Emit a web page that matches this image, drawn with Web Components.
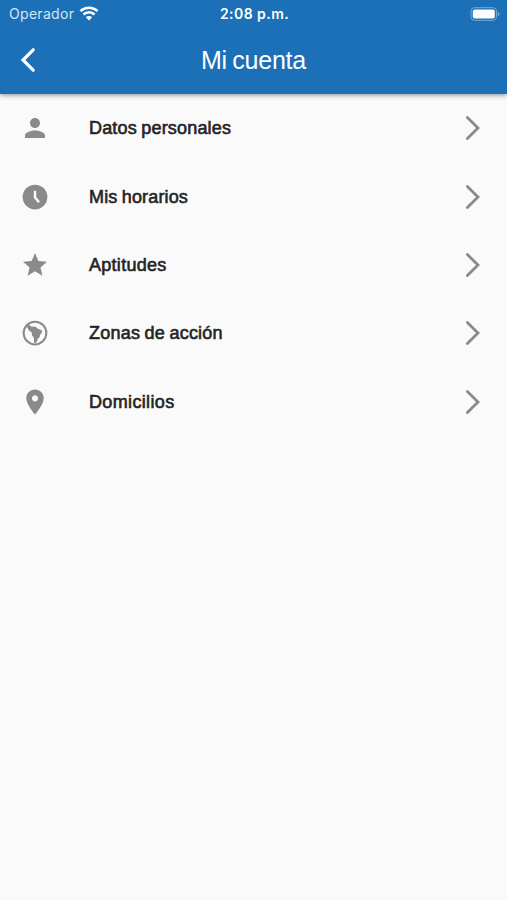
<!DOCTYPE html>
<html lang="es">
<head>
    <meta charset="UTF-8">
    <meta name="viewport" content="width=device-width, initial-scale=1.0">
    <title>Mi cuenta</title>
    <style>
        body {
            margin: 0;
            min-height: 100vh;
            background: #fafafa;
            font-family: "Liberation Sans", Arial, sans-serif;
        }
    </style>
</head>
<body>
    <app-header>
        <status-bar slot="status" carrier="Operador" time="2:08 p.m."></status-bar>
        Mi cuenta
    </app-header>
    <account-menu>
        <menu-row icon="person" style="--spacing: 0.18px">Datos personales</menu-row>
        <menu-row icon="clock" style="--spacing: 0.15px">Mis horarios</menu-row>
        <menu-row icon="star">Aptitudes</menu-row>
        <menu-row icon="globe" style="--spacing: 0.22px">Zonas de acción</menu-row>
        <menu-row icon="pin" style="--spacing: 0.35px">Domicilios</menu-row>
    </account-menu>

    <script>
        const icons = {
            person: '<path d="M12 12c2.21 0 4-1.79 4-4s-1.79-4-4-4-4 1.79-4 4 1.79 4 4 4zm0 2c-2.67 0-8 1.34-8 4v2h16v-2c0-2.66-5.33-4-8-4z"/>',
            clock: '<circle cx="12" cy="12" r="9.9"/><path d="M12 7v5.3l3.2 3.9" fill="none" stroke="#fafafa" stroke-width="1.9"/>',
            star: '<path transform="translate(.5 .5) scale(.96)" d="M12 17.27L18.18 21l-1.64-7.03L22 9.24l-7.19-.61L12 2 9.19 8.63 2 9.24l5.46 4.73L5.82 21z"/>',
            globe: '<circle cx="12" cy="12" r="9.1" fill="none" stroke="#8a8a8a" stroke-width="1.6"/><path d="M6.8 5L8.8 6.7l2.2.2 1.6.1 1.6 1.5 3.3 1.3-.1 2-1.4 1.7-.3 1.9-1.4 1.2-.7 1.9-1.2 1.9-1.2-.8-.1-3.9-1.6-2-.1-2.3L7.2 9.9 5.5 7.2z"/>',
            pin: '<path d="M12 2C8.13 2 5 5.13 5 9c0 5.25 7 13 7 13s7-7.75 7-13c0-3.87-3.13-7-7-7zm0 9.5c-1.38 0-2.5-1.12-2.5-2.5s1.12-2.5 2.5-2.5 2.5 1.12 2.5 2.5-1.12 2.5-2.5 2.5z"/>'
        };

        class StatusBar extends HTMLElement {
            constructor() {
                super();
                this.attachShadow({ mode: 'open' });
                this.shadowRoot.innerHTML = `
                    <style>
                        :host {
                            display: grid;
                            grid-template-columns: 1fr auto 1fr;
                            align-items: center;
                            height: 27px;
                            padding: 0 7px 0 9px;
                            color: #fff;
                            font: 14px/27px Inter, sans-serif;
                        }
                        .left { display: flex; align-items: center; gap: 5px; }
                        .carrier { color: #d5e6f5; font-size: 14px; letter-spacing: 0.3px; }
                        .time { font-weight: 600; letter-spacing: 0.45px; }
                        .battery { justify-self: end; }
                        svg { display: block; }
                    </style>
                    <div class="left">
                        <span class="carrier">${this.getAttribute('carrier')}</span>
                        <svg width="20" height="15" viewBox="0 0 20 15" fill="none" stroke="#fff" stroke-width="2.6">
                            <path d="M1.5 5.1a12.4 12.4 0 0 1 17 0M4.5 8.5a8 8 0 0 1 11 0"/>
                            <path d="M6.8 11.2a4.6 4.6 0 0 1 6.4 0L10 14.4z" fill="#fff" stroke="none"/>
                        </svg>
                    </div>
                    <span class="time">${this.getAttribute('time')}</span>
                    <svg class="battery" width="30" height="14" viewBox="0 0 30 14">
                        <rect x="1" y=".7" width="25.5" height="12.6" rx="3.5" fill="none" stroke="#75abd8"/>
                        <rect x="2.8" y="2.5" width="22" height="9" rx="2" fill="#fff"/>
                        <path d="M27.8 4.7c2.3.8 2.3 3.8 0 4.6z" fill="#75abd8"/>
                    </svg>
                `;
            }
        }

        class AppHeader extends HTMLElement {
            constructor() {
                super();
                this.attachShadow({ mode: 'open' });
                this.shadowRoot.innerHTML = `
                    <style>
                        :host {
                            display: block;
                            height: 94px;
                            background: #1b70b7;
                            box-shadow: 0 1px 5px rgba(0, 0, 0, 0.45);
                        }
                        .bar {
                            display: grid;
                            grid-template-columns: 60px 1fr 60px;
                            align-items: center;
                            height: 66px;
                        }
                        h1 {
                            margin: 0;
                            color: #fff;
                            font-size: 25px;
                            font-weight: 400;
                            text-align: center;
                            letter-spacing: -0.2px;
                            word-spacing: -1.5px;
                        }
                        svg { display: block; margin-left: 19px; }
                    </style>
                    <slot name="status"></slot>
                    <div class="bar">
                        <svg width="18" height="26" viewBox="0 0 18 26" fill="none" stroke="#fff" stroke-width="3.2" stroke-linecap="round">
                            <path d="M14.2 2.8L4 13l10.2 10.2"/>
                        </svg>
                        <h1><slot></slot></h1>
                    </div>
                `;
            }
        }

        class AccountMenu extends HTMLElement {
            constructor() {
                super();
                this.attachShadow({ mode: 'open' });
                this.shadowRoot.innerHTML = `
                    <style>
                        :host { display: flex; flex-direction: column; }
                    </style>
                    <slot></slot>
                `;
            }
        }

        class MenuRow extends HTMLElement {
            constructor() {
                super();
                this.attachShadow({ mode: 'open' });
                this.shadowRoot.innerHTML = `
                    <style>
                        :host {
                            display: grid;
                            grid-template-columns: 69px 1fr 18px;
                            align-items: center;
                            height: 68.4px;
                            padding: 0 25px 0 20px;
                        }
                        svg { display: block; }
                        .icon { fill: #8a8a8a; }
                        .label {
                            padding-top: 1px;
                            color: #242424;
                            font-size: 18px;
                            letter-spacing: var(--spacing, 0.28px);
                            word-spacing: -0.8px;
                            -webkit-text-stroke: 0.6px #242424;
                        }
                    </style>
                    <svg class="icon" width="30" height="30" viewBox="0 0 24 24">${icons[this.getAttribute('icon')]}</svg>
                    <span class="label"><slot></slot></span>
                    <svg width="18" height="26" viewBox="0 0 18 26" fill="none" stroke="#8a8a8a" stroke-width="2.8" stroke-linecap="round">
                        <path d="M3.4 2.5L14 13 3.4 23.5"/>
                    </svg>
                `;
            }
        }

        customElements.define('status-bar', StatusBar);
        customElements.define('app-header', AppHeader);
        customElements.define('account-menu', AccountMenu);
        customElements.define('menu-row', MenuRow);
    </script>
</body>
</html>
